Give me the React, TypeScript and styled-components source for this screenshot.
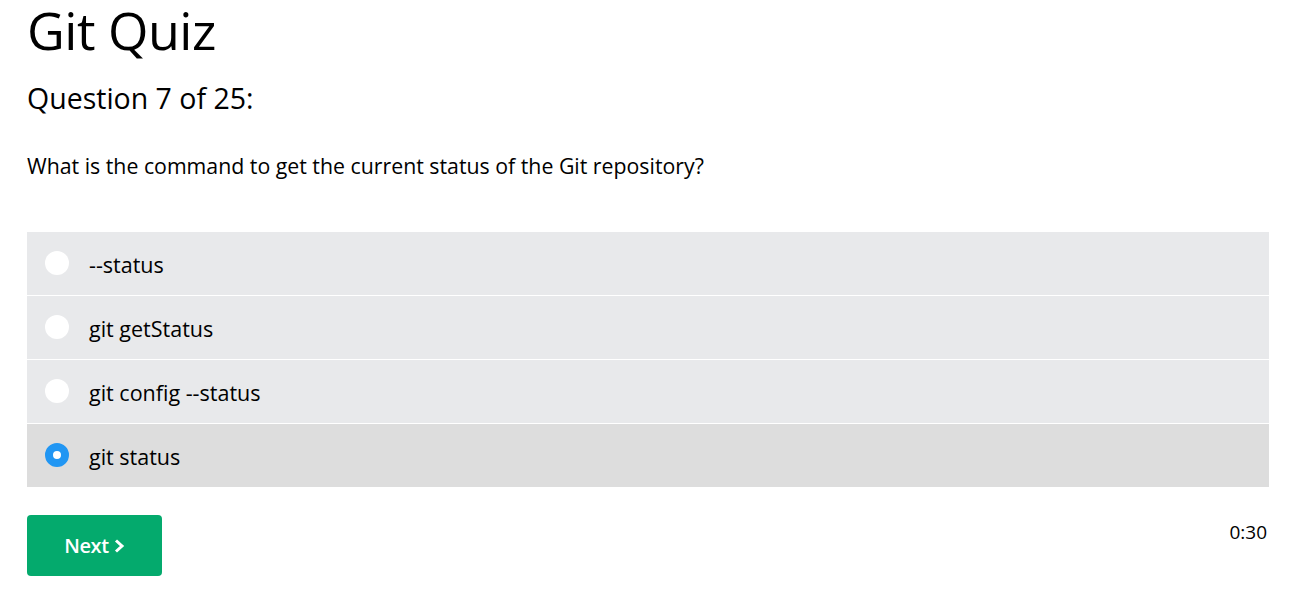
import React, { useState } from "react";
import styled, { createGlobalStyle } from "styled-components";

const Global = createGlobalStyle`
  html, body { margin: 0; padding: 0; background: #fff; }
  body { font-family: "Open Sans", "Noto Sans", sans-serif; color: #000; }
  * { box-sizing: border-box; }
`;

const Page = styled.div`
  padding: 0 34px 0 27px;
`;

const Title = styled.h1`
  margin: 0;
  font-size: 52px;
  font-weight: 400;
  line-height: 60px;
  letter-spacing: -0.5px;
`;

const Subtitle = styled.h2`
  margin: 18px 0 0;
  font-size: 28.5px;
  font-weight: 400;
  line-height: 40px;
`;

const QuestionText = styled.p`
  margin: 33px 0 0;
  font-size: 21.3px;
  line-height: 30px;
`;

const Options = styled.div`
  margin-top: 51px;
  display: flex;
  flex-direction: column;
  gap: 1px;
`;

const Option = styled.label<{ $selected: boolean }>`
  display: flex;
  align-items: center;
  height: 63px;
  padding-left: 18px;
  padding-top: 2px;
  background: ${(p) => (p.$selected ? "#dddddd" : "#e8e9eb")};
  cursor: pointer;
  font-size: 21.5px;
`;

const Radio = styled.span<{ $selected: boolean }>`
  width: 24px;
  height: 24px;
  border-radius: 50%;
  flex: none;
  margin-top: -3px;
  background: #fff;
  border: ${(p) => (p.$selected ? "8px solid #2196f3" : "none")};
  margin-right: 20px;
`;

const Footer = styled.div`
  margin-top: 28px;
  display: flex;
  justify-content: space-between;
  align-items: flex-start;
`;

const NextButton = styled.button`
  width: 135px;
  height: 61px;
  border: none;
  border-radius: 4px;
  background: #04aa6d;
  color: #fff;
  font-family: inherit;
  font-size: 20px;
  font-weight: 600;
  letter-spacing: -0.4px;
  display: flex;
  align-items: center;
  justify-content: center;
  gap: 4px;
  cursor: pointer;
  padding: 0;
`;

const Timer = styled.div`
  margin-top: 4px;
  margin-right: 2px;
  font-size: 19px;
  line-height: 26px;
`;

const options = ["--status", "git getStatus", "git config --status", "git status"];

export default function App() {
  const [sel, setSel] = useState(3);
  return (
    <>
      <Global />
      <Page>
        <Title>Git Quiz</Title>
        <Subtitle>Question 7 of 25:</Subtitle>
        <QuestionText>What is the command to get the current status of the Git repository?</QuestionText>
        <Options>
          {options.map((o, i) => (
            <Option key={o} $selected={sel === i} onClick={() => setSel(i)}>
              <Radio $selected={sel === i} />
              {o}
            </Option>
          ))}
        </Options>
        <Footer>
          <NextButton>
            Next
            <svg width="12" height="14" viewBox="0 0 12 14">
              <path d="M3 1.5 L9 7 L3 12.5" fill="none" stroke="#fff" strokeWidth="3" />
            </svg>
          </NextButton>
          <Timer>0:30</Timer>
        </Footer>
      </Page>
    </>
  );
}
